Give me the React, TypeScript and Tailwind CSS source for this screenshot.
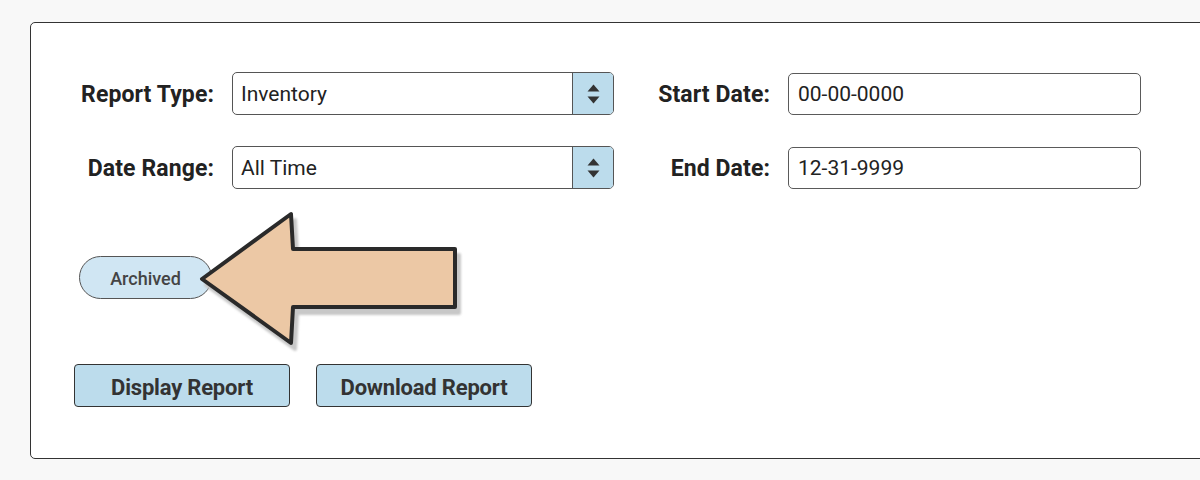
import type { ReactNode } from "react";

function Label({ children }: { children: ReactNode }) {
  return (
    <label className="pt-[4px] text-right text-[23px] font-bold tracking-[0.1px] text-[#222]">
      {children}
    </label>
  );
}

function SelectBox({ value }: { value: string }) {
  return (
    <div className="flex h-[43px] items-stretch overflow-hidden rounded-[5px] border-[1.5px] border-[#555] bg-white">
      <div className="flex flex-1 items-center pt-[2px] pl-[8px] text-[21px] text-[#222]">
        {value}
      </div>
      <div className="flex w-[41px] flex-col items-center justify-center gap-[4px] border-l-[1.5px] border-[#555] bg-[#bcdcec]">
        <svg width="13" height="8" viewBox="0 0 13 8">
          <path d="M6.5 0.5 L12.5 7.5 L0.5 7.5 Z" fill="#333" />
        </svg>
        <svg width="13" height="8" viewBox="0 0 13 8">
          <path d="M0.5 0.5 L12.5 0.5 L6.5 7.5 Z" fill="#333" />
        </svg>
      </div>
    </div>
  );
}

function TextBox({ value }: { value: string }) {
  return (
    <div className="flex h-[42px] items-center rounded-[5px] border-[1.5px] border-[#5a5a5a] bg-white pt-[2px] pl-[9px] text-[21px] text-[#222]">
      {value}
    </div>
  );
}

export default function App() {
  return (
    <div
      className="h-[480px] w-[1200px] overflow-hidden bg-[#f8f8f8] pt-[22px] pl-[30px]"
      style={{ fontFamily: "Roboto, 'Noto Sans', sans-serif" }}
    >
      <div className="relative h-[437px] w-[1200px] rounded-[5px] border-[1.5px] border-[#333] bg-white pt-[49px]">
        {/* form fields */}
        <div className="grid grid-cols-[183px_382px_138px_353px] items-center gap-x-[18px] gap-y-[31px]">
          <Label>Report Type:</Label>
          <SelectBox value="Inventory" />
          <Label>Start Date:</Label>
          <TextBox value="00-00-0000" />

          <Label>Date Range:</Label>
          <SelectBox value="All Time" />
          <Label>End Date:</Label>
          <TextBox value="12-31-9999" />
        </div>

        {/* status pill */}
        <div className="mt-[67px] pl-[48px]">
          <div className="flex h-[43px] w-[133px] items-center justify-center rounded-full border-[1.5px] border-[#555] bg-[#d0e6f3] pt-[1px] text-[18px] font-medium text-[#444]">
            Archived
          </div>
        </div>

        {/* actions */}
        <div className="mt-[65px] flex gap-[26px] pl-[43px]">
          <button className="h-[43px] w-[216px] rounded-[4px] border-[1.5px] border-[#333] bg-[#bcdcec] pt-[3px] text-[22px] font-bold tracking-[-0.2px] text-[#333]">
            Display Report
          </button>
          <button className="h-[43px] w-[216px] rounded-[4px] border-[1.5px] border-[#333] bg-[#bcdcec] pt-[3px] text-[22px] font-bold tracking-[-0.2px] text-[#333]">
            Download Report
          </button>
        </div>

        {/* callout arrow */}
        <svg
          className="absolute left-[158px] top-[176px]"
          width="320"
          height="190"
          viewBox="190 200 320 190"
        >
          <defs>
            <filter id="blur" x="-10%" y="-10%" width="120%" height="120%">
              <feGaussianBlur stdDeviation="1.2" />
            </filter>
          </defs>
          <path
            d="M203 280 L292 215 L294 250 L456 250 L456 308 L294 308 L292 344 Z"
            transform="translate(4 6)"
            fill="#c8c8c8"
            stroke="#c8c8c8"
            strokeWidth="4"
            strokeLinejoin="round"
            filter="url(#blur)"
          />
          <path
            d="M203 280 L292 215 L294 250 L456 250 L456 308 L294 308 L292 344 Z"
            fill="#ecc8a5"
            stroke="#2a2a2a"
            strokeWidth="4"
            strokeLinejoin="round"
          />
        </svg>
      </div>
    </div>
  );
}
